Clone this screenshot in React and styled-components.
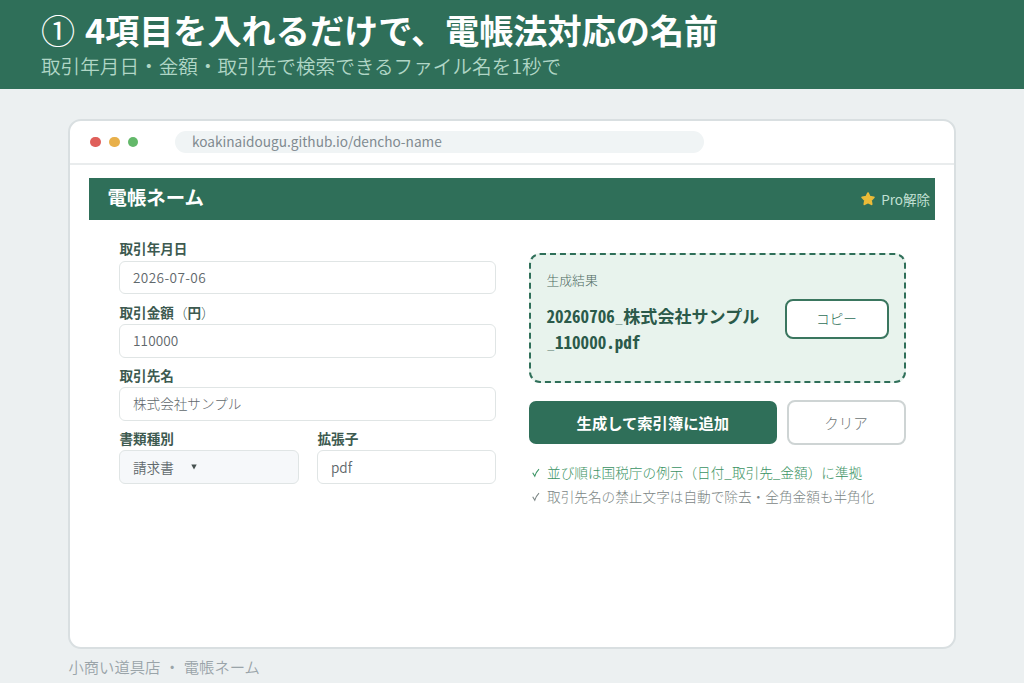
import styled, { createGlobalStyle } from "styled-components";

export default function App () {
    return (
        <>
            <GlobalStyle />
            <Page>
                <Banner>
                    <h1><Circled>①</Circled> 4項目を入れるだけで、電帳法対応の名前</h1>
                    <p>取引年月日・金額・取引先で検索できるファイル名を1秒で</p>
                </Banner>
                <Window>
                    <Chrome>
                        <Dots>
                            <Dot color="#df5f5a" />
                            <Dot color="#e8b04b" />
                            <Dot color="#63b86a" />
                        </Dots>
                        <Url>koakinaidougu.github.io/dencho-name</Url>
                    </Chrome>
                    <AppBar>
                        <h2>電帳ネーム</h2>
                        <Pro>
                            <Star />
                            Pro解除
                        </Pro>
                    </AppBar>
                    <Columns>
                        <Form>
                            <Field label="取引年月日" value="2026-07-06" spacing="0.4px" />
                            <Field label={<>取引金額<Thin>（</Thin>円<Thin>）</Thin></>} value="110000" spacing="0.1px" />
                            <Field label="取引先名" value="株式会社サンプル" light />
                            <Pair>
                                <Field label="書類種別" value="請求書" select />
                                <Field label="拡張子" value="pdf" />
                            </Pair>
                        </Form>
                        <Output>
                            <Result>
                                <ResultText>
                                    <span>生成結果</span>
                                    <FileName>
                                        20260706<Underscore>_</Underscore>株式会社サンプル<br />
                                        <Underscore>_</Underscore>110000.pdf
                                    </FileName>
                                </ResultText>
                                <CopyButton>コピー</CopyButton>
                            </Result>
                            <Actions>
                                <MainButton>生成して索引簿に追加</MainButton>
                                <ClearButton>クリア</ClearButton>
                            </Actions>
                            <Notes>
                                <Note color="#3a9363"><Check />並び順は国税庁の例示（日付_取引先_金額）に準拠</Note>
                                <Note color="#7c8685"><Check />取引先名の禁止文字は自動で除去・全角金額も半角化</Note>
                            </Notes>
                        </Output>
                    </Columns>
                </Window>
                <Footer>小商い道具店 ・ 電帳ネーム</Footer>
            </Page>
        </>
    );
}

function Field ({ label, value, select, light, spacing }) {
    return (
        <FieldBox>
            <Label>{label}</Label>
            <Input $select={select} $light={light} $spacing={spacing}>
                {value}
                {select && <Caret viewBox="0 0 6 6"><path d="M0.3 0.6h5.4L3 5.6z" fill="#46514f" /></Caret>}
            </Input>
        </FieldBox>
    );
}

function Star () {
    return (
        <StarIcon viewBox="0 0 16 16">
            <path
                d="M8 2.2l1.8 3.6 4 .6-2.9 2.8.7 4L8 11.3l-3.6 1.9.7-4L2.2 6.4l4-.6z"
                fill="#ebbb38"
                stroke="#ebbb38"
                strokeWidth="1.9"
                strokeLinejoin="round"
            />
        </StarIcon>
    );
}

function Check () {
    return (
        <CheckIcon viewBox="0 0 10 12">
            <path d="M1.7 6.7l2.1 3.5C4.7 7.3 6 5.1 8 3.1" fill="none" stroke="currentColor" strokeWidth="1.1" />
        </CheckIcon>
    );
}

const GlobalStyle = createGlobalStyle`
    * {
        box-sizing: border-box;
        margin: 0;
        padding: 0;
    }
    body {
        background: #ecf0f1;
        font-family: "Noto Sans CJK JP", sans-serif;
        overflow: hidden;
    }
    button {
        font-family: inherit;
    }
`;

const Page = styled.div`
    width: 1024px;
    height: 683px;
    display: flex;
    flex-direction: column;
`;

const Banner = styled.header`
    height: 88.6px;
    flex-shrink: 0;
    padding: 7px 41px 0;
    background: #2f6f59;
    color: #ffffff;
    white-space: nowrap;
    h1 {
        font-size: 34.15px;
        line-height: 44px;
        font-weight: 700;
        word-spacing: 2px;
    }
    p {
        margin-top: 3px;
        font-size: 19.62px;
        line-height: 24px;
        font-weight: 350;
        color: #b0d6c6;
    }
`;

const Circled = styled.span`
    font-weight: 400;
`;

const Window = styled.main`
    width: 888px;
    height: 530px;
    flex-shrink: 0;
    margin: 30.4px 0 0 68px;
    background: #ffffff;
    border: 2px solid #d9dfe1;
    border-radius: 13px;
`;

const Chrome = styled.div`
    height: 44px;
    display: flex;
    align-items: center;
    padding-left: 20px;
    border-bottom: 2px solid #e9eced;
`;

const Dots = styled.div`
    display: flex;
    gap: 8px;
    width: 85px;
`;

const Dot = styled.span`
    width: 10.8px;
    height: 10.8px;
    border-radius: 50%;
    background: ${props => props.color};
`;

const Url = styled.div`
    width: 529px;
    height: 22px;
    padding-left: 17px;
    border-radius: 11px;
    background: #f0f4f5;
    color: #808a90;
    font-size: 13.65px;
    line-height: 20px;
`;

const AppBar = styled.div`
    height: 42.5px;
    margin: 13px 19px 0;
    padding: 0 5px 0 18.5px;
    display: flex;
    justify-content: space-between;
    background: #2f6f59;
    h2 {
        font-size: 19.4px;
        line-height: 38px;
        font-weight: 700;
        color: #ffffff;
    }
`;

const Pro = styled.div`
    display: flex;
    align-items: center;
    gap: 5px;
    font-size: 13.5px;
    line-height: 38px;
    color: #c1e0d3;
`;

const StarIcon = styled.svg`
    width: 16px;
    height: 16px;
`;

const Columns = styled.div`
    display: flex;
    gap: 33px;
    padding: 20px 48px 0 49px;
`;

const Form = styled.div`
    width: 376.5px;
    display: flex;
    flex-direction: column;
`;

const Pair = styled.div`
    display: grid;
    grid-template-columns: 180px 178.5px;
    gap: 18px;
`;

const FieldBox = styled.div`
    height: 63.1px;
`;

const Label = styled.div`
    height: 20.5px;
    padding-left: 0.5px;
    font-size: 13.6px;
    line-height: 16px;
    font-weight: 700;
    color: #3d5a50;
`;

const Thin = styled.span`
    font-weight: 300;
`;

const Input = styled.div`
    height: 33.5px;
    padding-left: 13px;
    display: flex;
    align-items: center;
    border: 1.5px solid #e0e5e5;
    border-radius: 6px;
    background: ${props => props.$select ? "#f6f8fa" : "#ffffff"};
    color: #5f686c;
    font-size: 13.6px;
    line-height: 31px;
    font-weight: ${props => props.$light ? 300 : 350};
    letter-spacing: ${props => props.$spacing || "normal"};
`;

const Caret = styled.svg`
    width: 6px;
    height: 6px;
    margin-left: 17px;
`;

const Output = styled.div`
    width: 377px;
    padding-top: 13px;
`;

const Result = styled.section`
    height: 130px;
    padding: 0 15px 0 16px;
    display: flex;
    justify-content: space-between;
    border: 2px dashed #2f6f59;
    border-radius: 11px;
    background: #e8f3ed;
`;

const ResultText = styled.div`
    padding-top: 14.5px;
    > span {
        display: block;
        font-size: 12.8px;
        line-height: 20px;
        font-weight: 300;
        color: #4d6a5f;
    }
`;

const FileName = styled.p`
    margin-top: 13px;
    font-size: 17.07px;
    line-height: 25.6px;
    font-weight: 700;
    color: #2b5a4a;
    font-feature-settings: "hwid" 1;
    white-space: nowrap;
`;

const Underscore = styled.span`
    font-weight: 300;
    color: #86a095;
`;

const CopyButton = styled.button`
    width: 104px;
    height: 40px;
    margin-top: 44px;
    padding-bottom: 2px;
    border: 2px solid #3a765f;
    border-radius: 8px;
    background: #ffffff;
    color: #2f6f59;
    font-size: 13.6px;
    font-weight: 300;
`;

const Actions = styled.div`
    margin-top: 17px;
    display: grid;
    grid-template-columns: 248px 119px;
    gap: 10px;
`;

const MainButton = styled.button`
    height: 43px;
    margin: 0.5px 0 0 0.7px;
    border: none;
    border-radius: 7px;
    background: #2f6f59;
    color: #ffffff;
    font-size: 15.3px;
    font-weight: 700;
`;

const ClearButton = styled.button`
    height: 44.5px;
    border: 2px solid #ced4d4;
    border-radius: 8px;
    background: #ffffff;
    color: #6c7575;
    font-size: 14.5px;
    font-weight: 300;
`;

const Notes = styled.div`
    margin-top: 15px;
`;

const Note = styled.p`
    display: flex;
    align-items: center;
    gap: 6px;
    padding-left: 2.5px;
    font-size: 13.65px;
    line-height: 24px;
    font-weight: 300;
    white-space: nowrap;
    color: ${props => props.color};
`;

const CheckIcon = styled.svg`
    width: 10px;
    height: 12px;
`;

const Footer = styled.footer`
    padding: 5px 0 0 68.5px;
    font-size: 15.3px;
    line-height: 24px;
    font-weight: 350;
    word-spacing: 0.7px;
    color: #9aa4a9;
`;
